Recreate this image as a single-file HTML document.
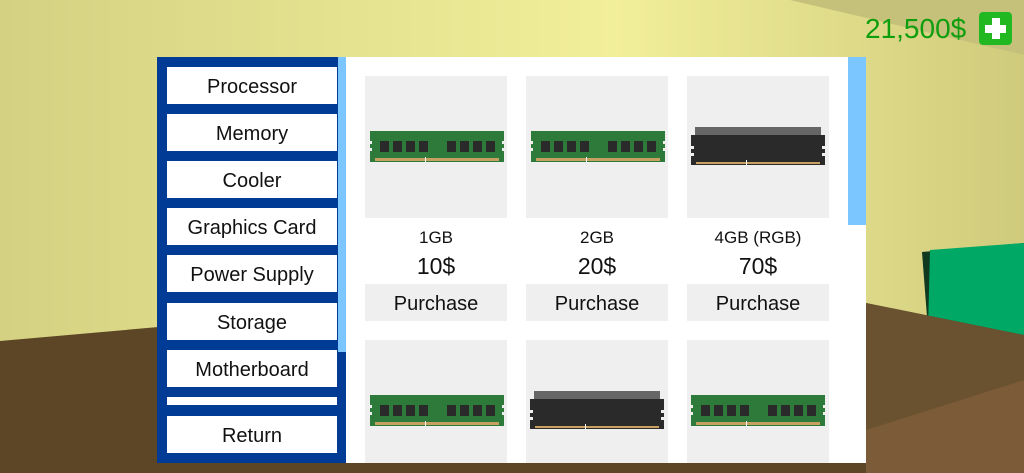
<!DOCTYPE html>
<html><head><style>
body{margin:0;width:1024px;height:473px;overflow:hidden;position:relative;font-family:"Liberation Sans",Roboto,sans-serif;}
.bg{position:absolute;left:0;top:0}
.side{position:absolute;left:157px;top:57px;width:181px;height:406px;background:#003c96}
.strip{position:absolute;left:338px;top:57px;width:8px;height:295px;background:#7bc6ff}
.stripb{position:absolute;left:338px;top:352px;width:8px;height:111px;background:#003c96}
.btn{position:absolute;left:167px;width:170px;height:37px;background:#fff;font-size:20px;text-align:center;line-height:41px;color:#111}
.content{position:absolute;left:346px;top:57px;width:520px;height:406px;background:#fff;overflow:hidden}
.scroll{position:absolute;left:502px;top:0;width:18px;height:168px;background:#7bc6ff}
.img{position:absolute;width:142px;height:142px;background:#efefef}
.lbl{position:absolute;width:142px;text-align:center;font-size:17px;color:#111}
.price{position:absolute;width:142px;text-align:center;font-size:23px;color:#111}
.pb{position:absolute;width:142px;height:37px;background:#efefef;text-align:center;line-height:40px;font-size:20px;color:#111}
.money{position:absolute;left:865px;top:13px;font-size:28px;color:#0e9e0e}
.plus{position:absolute;left:979px;top:12px;width:33px;height:33px;border-radius:4px;background:#22b822}
</style></head><body>
<svg class="bg" width="1024" height="473">
<defs><linearGradient id="w" x1="0" y1="0" x2="1" y2="0"><stop offset="0" stop-color="#d4d282"/><stop offset=".6" stop-color="#f2ef9a"/><stop offset="1" stop-color="#cfcb7c"/></linearGradient></defs>
<rect width="1024" height="473" fill="url(#w)"/>
<polygon points="790,0 1024,0 1024,55" fill="#c6c17a"/>
<polygon points="922,252 1024,243 1024,340 928,330" fill="#0f3a20"/>
<polygon points="930,250 1024,243 1024,340 928,330" fill="#00a865"/>
<polygon points="0,341 600,288 866,303 1024,335 1024,473 0,473" fill="#5d4626"/>
<polygon points="866,303 1024,335 1024,473 866,473" fill="#6a5130"/>
<polygon points="866,430 1024,380 1024,473 866,473" fill="#7c5c38"/>
</svg>
<div class="money">21,500$</div>
<div class="plus"><div style="position:absolute;left:13px;top:6px;width:8px;height:21px;background:#fff"></div><div style="position:absolute;left:6px;top:13px;width:21px;height:8px;background:#fff"></div></div>
<div class="side"></div><div class="strip"></div><div class="stripb"></div>
<div class="btn" style="top:67px">Processor</div>
<div class="btn" style="top:114px">Memory</div>
<div class="btn" style="top:161px">Cooler</div>
<div class="btn" style="top:208px">Graphics Card</div>
<div class="btn" style="top:255px">Power Supply</div>
<div class="btn" style="top:303px">Storage</div>
<div class="btn" style="top:350px">Motherboard</div>
<div class="btn" style="top:397px;height:8px"></div>
<div class="btn" style="top:416px">Return</div>
<svg width="0" height="0" style="position:absolute"><defs>
<g id="g"><rect x="0" y="0" width="134" height="31" fill="#2d7a3a"/><rect x="0" y="10" width="2" height="3" fill="#efefef"/><rect x="0" y="17" width="2" height="3" fill="#efefef"/><rect x="132" y="10" width="2" height="3" fill="#efefef"/><rect x="132" y="17" width="2" height="3" fill="#efefef"/>
<g fill="#2a2a2a"><rect x="10" y="10" width="9" height="11"/><rect x="23" y="10" width="9" height="11"/><rect x="36" y="10" width="9" height="11"/><rect x="49" y="10" width="9" height="11"/><rect x="77" y="10" width="9" height="11"/><rect x="90" y="10" width="9" height="11"/><rect x="103" y="10" width="9" height="11"/><rect x="116" y="10" width="9" height="11"/></g>
<rect x="5" y="27" width="124" height="3" fill="#c8a060"/><rect x="55" y="26" width="1" height="5" fill="#fff"/></g>
<g id="d"><rect x="4" y="0" width="126" height="8" fill="#666"/><rect x="0" y="8" width="134" height="30" fill="#2a2a2a"/><rect x="0" y="19" width="3" height="3" fill="#efefef"/><rect x="0" y="26" width="3" height="3" fill="#efefef"/><rect x="131" y="19" width="3" height="3" fill="#efefef"/><rect x="131" y="26" width="3" height="3" fill="#efefef"/><rect x="5" y="35" width="124" height="2" fill="#c8a060"/><rect x="55" y="33" width="1" height="5" fill="#fff"/></g>
</defs></svg>
<div class="content">
<div class="scroll"></div>
<div class="img" style="left:19px;top:19px"><svg width="142" height="142"><use href="#g" x="5" y="55"/></svg></div>
<div class="img" style="left:180px;top:19px"><svg width="142" height="142"><use href="#g" x="5" y="55"/></svg></div>
<div class="img" style="left:341px;top:19px"><svg width="142" height="142"><use href="#d" x="4" y="51"/></svg></div>
<div class="lbl" style="left:19px;top:171px">1GB</div>
<div class="lbl" style="left:180px;top:171px">2GB</div>
<div class="lbl" style="left:341px;top:171px">4GB (RGB)</div>
<div class="price" style="left:19px;top:196px">10$</div>
<div class="price" style="left:180px;top:196px">20$</div>
<div class="price" style="left:341px;top:196px">70$</div>
<div class="pb" style="left:19px;top:227px">Purchase</div>
<div class="pb" style="left:180px;top:227px">Purchase</div>
<div class="pb" style="left:341px;top:227px">Purchase</div>
<div class="img" style="left:19px;top:283px"><svg width="142" height="142"><use href="#g" x="5" y="55"/></svg></div>
<div class="img" style="left:180px;top:283px"><svg width="142" height="142"><use href="#d" x="4" y="51"/></svg></div>
<div class="img" style="left:341px;top:283px"><svg width="142" height="142"><use href="#g" x="4" y="55"/></svg></div>
</div>
</body></html>
